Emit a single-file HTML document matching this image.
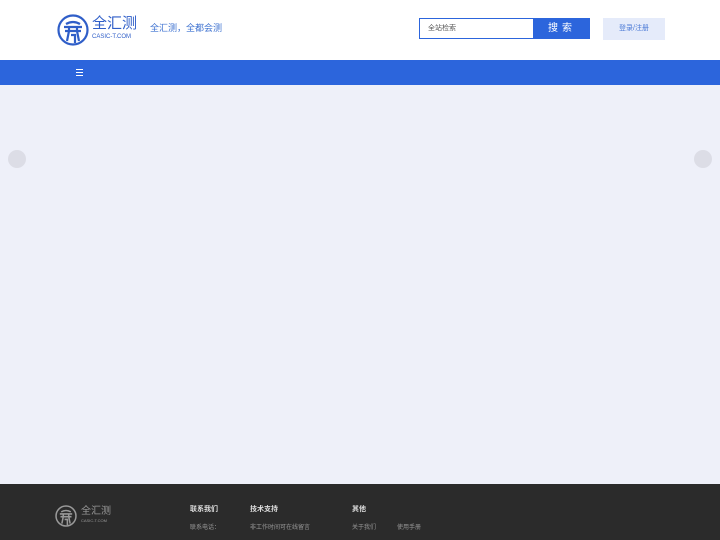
<!DOCTYPE html>
<html><head><meta charset="utf-8"><style>
*{margin:0;padding:0;box-sizing:border-box}
body{width:720px;height:540px;overflow:hidden;background:#eef0f9;font-family:"Liberation Sans","Noto Sans CJK SC",sans-serif;position:relative}
.hd{position:absolute;left:0;top:0;width:720px;height:60px;background:#fff}
.nav{position:absolute;left:0;top:60px;width:720px;height:25px;background:#2c65dc}
.ft{position:absolute;left:0;top:484px;width:720px;height:56px;background:#2b2b2b;color:#bbb}
.a{position:absolute;white-space:nowrap;line-height:1}
</style></head><body>
<div class="hd">
<svg class="a" style="left:57px;top:14px" width="32" height="32" viewBox="0 0 32 32" fill="none" stroke="#2f5ec8" stroke-width="2.2"><circle cx="16" cy="16" r="14.5"/><path d="M7 13h18M9 10q7-4 14 0M12 13v4M20 13v4M8 17h16M12 17l-2 10M20 17l2 10M14 21h4v8"/></svg>
<div class="a" style="left:92px;top:16px;font-size:15px;color:#2f5ec8">全汇测</div>
<div class="a" style="left:92px;top:34px;font-size:6px;color:#2f5ec8">CASIC-T.COM</div>
<div class="a" style="left:150px;top:24px;font-size:9px;color:#3e72d0">全汇测，全都会测</div>
<div class="a" style="left:419px;top:18px;width:115px;height:21px;border:1px solid #2c65dc;font-size:7px;color:#555;padding:6px 8px">全站检索</div>
<div class="a" style="left:534px;top:18px;width:56px;height:21px;background:#2c65dc;color:#fff;font-size:10px;text-align:center;line-height:21px;letter-spacing:4px">搜索</div>
<div class="a" style="left:603px;top:18px;width:62px;height:22px;background:#e5ebfa;color:#4a79d6;font-size:7px;text-align:center;line-height:22px">登录/注册</div>
</div>
<div class="nav"><div class="a" style="left:76px;top:9px;width:7px;height:7px;border-top:1.5px solid #fff;border-bottom:1.5px solid #fff"><div style="margin-top:1.5px;height:1.2px;background:#fff"></div></div></div>
<div class="a" style="left:8px;top:150px;width:18px;height:18px;border-radius:50%;background:#dcdde6"></div>
<div class="a" style="left:694px;top:150px;width:18px;height:18px;border-radius:50%;background:#dcdde6"></div>
<div class="ft">
<svg class="a" style="left:55px;top:21px" width="22" height="22" viewBox="0 0 32 32" fill="none" stroke="#999" stroke-width="2.2"><circle cx="16" cy="16" r="14.5"/><path d="M7 13h18M9 10q7-4 14 0M12 13v4M20 13v4M8 17h16M12 17l-2 10M20 17l2 10M14 21h4v8"/></svg>
<div class="a" style="left:81px;top:23px;font-size:10px;color:#999">全汇测</div>
<div class="a" style="left:81px;top:35px;font-size:4px;color:#999">CASIC-T.COM</div>
<div class="a" style="left:190px;top:22px;font-size:7px;color:#ddd;font-weight:bold">联系我们</div>
<div class="a" style="left:250px;top:22px;font-size:7px;color:#ddd;font-weight:bold">技术支持</div>
<div class="a" style="left:352px;top:22px;font-size:7px;color:#ddd;font-weight:bold">其他</div>
<div class="a" style="left:190px;top:41px;font-size:6px;color:#999">联系电话：</div>
<div class="a" style="left:250px;top:41px;font-size:6px;color:#999">非工作时间可在线留言</div>
<div class="a" style="left:352px;top:41px;font-size:6px;color:#999">关于我们</div>
<div class="a" style="left:397px;top:41px;font-size:6px;color:#999">使用手册</div>
</div>
</body></html>
